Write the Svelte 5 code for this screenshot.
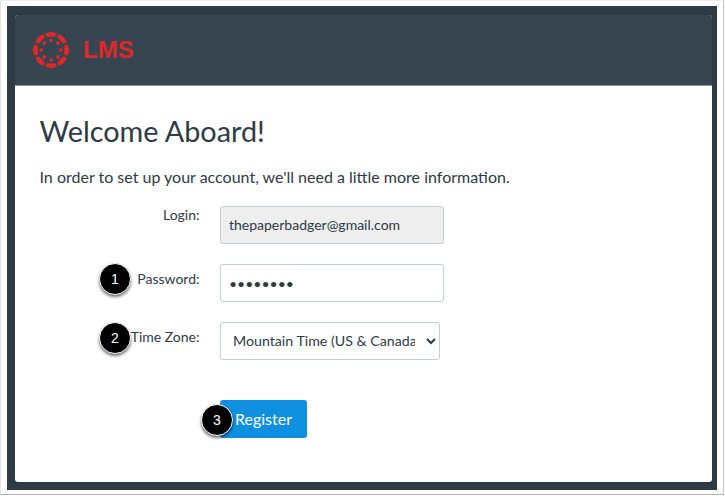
<script>
  const angles = [0, 45, 90, 135, 180, 225, 270, 315];
  const callouts = [
    { n: 1, cls: 'c1' },
    { n: 2, cls: 'c2' },
    { n: 3, cls: 'c3' }
  ];
</script>

<div class="sheet">
  <div class="frame">
    <div class="card">
      <header class="bar">
        <svg class="logo" viewBox="-20 -20 40 40" width="40" height="40" aria-hidden="true">
          {#each angles as a}
            <g transform="rotate({a})">
              <path d="M-5.6 -16.6 Q0 -19.6 5.6 -16.6 Q5.4 -13.2 3.2 -13.2 L-3.2 -13.2 Q-5.4 -13.2 -5.6 -16.6 Z" fill="#e0282a" />
              <circle cx="0" cy="-9.7" r="1.8" fill="#e0282a" />
            </g>
          {/each}
        </svg>
        <span class="brand">LMS</span>
      </header>
      <main class="body">
        <h1>Welcome Aboard!</h1>
        <p>In order to set up your account, we'll need a little more information.</p>
        <form class="form">
          <label for="login">Login:</label>
          <input id="login" class="field readonly" value="thepaperbadger@gmail.com" readonly />
          <label for="pw" class="low">Password:</label>
          <input id="pw" class="field" type="password" value="password" readonly />
          <label for="tz" class="low">Time Zone:</label>
          <select id="tz" class="select">
            <option>Mountain Time (US &amp; Canada)</option>
          </select>
          <button type="button" class="register">Register</button>
        </form>
      </main>
    </div>
  </div>
  {#each callouts as c}
    <span class="callout {c.cls}">{c.n}</span>
  {/each}
</div>

<style>
  :global(body) {
    margin: 0;
    background: #fff;
  }
  .sheet {
    position: relative;
    box-sizing: border-box;
    width: 724px;
    height: 495px;
    padding: 5px 5px 4px 6px;
    border-right: 1px solid #c4c4c4;
    border-bottom: 1px solid #b4b4b4;
    border-left: 1px solid #e2e2e2;
    border-top: 1px solid #eee;
    font-family: Lato, sans-serif;
    color: #2d3b45;
  }
  .frame {
    box-sizing: border-box;
    height: 484px;
    width: 710px;
    padding: 9px 5px 8px 8px;
    background: #2d3b45;
  }
  .card {
    height: 100%;
    background: #fff;
    border-radius: 3px;
    overflow: hidden;
  }
  .bar {
    box-sizing: border-box;
    height: 71px;
    display: flex;
    align-items: center;
    gap: 12px;
    padding: 0 0 1px 16px;
    background: #36454f;
    border-bottom: 1px solid #8a969e;
  }
  .logo {
    display: block;
  }
  .brand {
    font-family: "Liberation Sans", Arial, sans-serif;
    font-weight: 700;
    font-size: 24px;
    color: #e0282a;
  }
  .body {
    padding: 27px 0 0 24.5px;
  }
  h1 {
    margin: 0;
    font-size: 28.8px;
    font-weight: 400;
    line-height: 36px;
  }
  p {
    margin: 16px 0 0;
    font-size: 16px;
    line-height: 24px;
  }
  .form {
    display: grid;
    grid-template-columns: 160px auto;
    column-gap: 20.5px;
    row-gap: 20px;
    justify-content: start;
    align-items: start;
    margin-top: 17px;
  }
  label {
    justify-self: end;
    font-size: 14px;
    line-height: 18px;
  }
  .low {
    padding-top: 6px;
  }
  .field,
  .select {
    box-sizing: border-box;
    height: 38px;
    border: 1px solid #c7cdd1;
    border-radius: 3px;
    font-family: Lato, sans-serif;
    color: #2d3b45;
    background: #fff;
    margin: 0;
    outline: none;
  }
  .field {
    width: 224px;
    padding: 0 8px;
    font-size: 14px;
  }
  .readonly {
    background: #eeeeee;
    padding-bottom: 2px;
  }
  .select {
    width: 220px;
    padding: 0 8px 2px 8px;
    font-size: 14.2px;
  }
  .register {
    grid-column: 2;
    justify-self: start;
    box-sizing: border-box;
    height: 38px;
    width: 87px;
    margin-top: 20px;
    border: 0;
    border-radius: 3px;
    background: #0f8fe0;
    color: #fff;
    font-family: Lato, sans-serif;
    font-size: 16px;
    padding: 0 0 2px;
  }
  .callout {
    position: absolute;
    width: 32px;
    height: 32px;
    border-radius: 50%;
    background: #000;
    color: #fff;
    border: 1px solid #fff;
    box-sizing: border-box;
    display: flex;
    align-items: center;
    justify-content: center;
    font-family: "Liberation Sans", sans-serif;
    font-size: 14px;
    box-shadow: 0 2px 3px rgba(0, 0, 0, 0.55);
  }
  .c1 { left: 98px; top: 262px; }
  .c2 { left: 98px; top: 321px; }
  .c3 { left: 200px; top: 403px; }
</style>
